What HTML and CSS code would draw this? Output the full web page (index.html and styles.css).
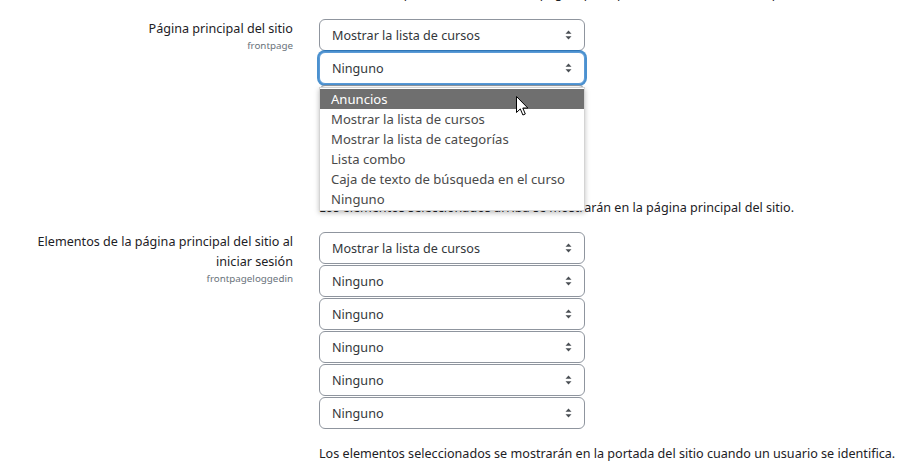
FILE: index.html
```html
<!DOCTYPE html>
<html lang="es">
<head>
<meta charset="utf-8">
<title>Página principal</title>
<link rel="stylesheet" href="styles.css">
</head>
<body>
<div class="page">
  <div class="prev-desc">Este resumen puede mostrarse en la página principal del sitio usando el bloque de resumen del curso/sitio.</div>

  <div class="setting first">
    <div class="label">
      <div class="name">Página principal del sitio</div>
      <div class="key">frontpage</div>
    </div>
    <div class="control">
      <div class="selects">
        <div class="select"><span>Mostrar la lista de cursos</span><svg class="arrow" width="7" height="10" viewBox="0 0 7 10"><path d="M3.5 0.5L6.5 3.8H0.5Z M3.5 9.5L0.5 6.2H6.5Z"/></svg></div>
        <div class="select focus"><span>Ninguno</span><svg class="arrow" width="7" height="10" viewBox="0 0 7 10"><path d="M3.5 0.5L6.5 3.8H0.5Z M3.5 9.5L0.5 6.2H6.5Z"/></svg></div>
        <div class="select"><span>Ninguno</span><svg class="arrow" width="7" height="10" viewBox="0 0 7 10"><path d="M3.5 0.5L6.5 3.8H0.5Z M3.5 9.5L0.5 6.2H6.5Z"/></svg></div>
        <div class="select"><span>Ninguno</span><svg class="arrow" width="7" height="10" viewBox="0 0 7 10"><path d="M3.5 0.5L6.5 3.8H0.5Z M3.5 9.5L0.5 6.2H6.5Z"/></svg></div>
        <div class="select"><span>Ninguno</span><svg class="arrow" width="7" height="10" viewBox="0 0 7 10"><path d="M3.5 0.5L6.5 3.8H0.5Z M3.5 9.5L0.5 6.2H6.5Z"/></svg></div>

        <ul class="dropdown">
          <li class="active">Anuncios</li>
          <li>Mostrar la lista de cursos</li>
          <li>Mostrar la lista de categorías</li>
          <li>Lista combo</li>
          <li>Caja de texto de búsqueda en el curso</li>
          <li>Ninguno</li>
        </ul>
        <svg class="cursor" width="13" height="21" viewBox="0 0 13 21"><path d="M0.5 0.5V16.5L4.3 12.9L6.9 19L9.3 18L6.8 12H11.8Z" fill="#fff" stroke="#000" stroke-width="1" stroke-linejoin="miter"/></svg>
      </div>
      <div class="desc">Los elementos seleccionados arriba se mostrarán en la página principal del sitio.</div>
    </div>
  </div>

  <div class="setting">
    <div class="label">
      <div class="name">Elementos de la página principal del sitio al iniciar sesión</div>
      <div class="key">frontpageloggedin</div>
    </div>
    <div class="control">
      <div class="selects">
        <div class="select"><span>Mostrar la lista de cursos</span><svg class="arrow" width="7" height="10" viewBox="0 0 7 10"><path d="M3.5 0.5L6.5 3.8H0.5Z M3.5 9.5L0.5 6.2H6.5Z"/></svg></div>
        <div class="select"><span>Ninguno</span><svg class="arrow" width="7" height="10" viewBox="0 0 7 10"><path d="M3.5 0.5L6.5 3.8H0.5Z M3.5 9.5L0.5 6.2H6.5Z"/></svg></div>
        <div class="select"><span>Ninguno</span><svg class="arrow" width="7" height="10" viewBox="0 0 7 10"><path d="M3.5 0.5L6.5 3.8H0.5Z M3.5 9.5L0.5 6.2H6.5Z"/></svg></div>
        <div class="select"><span>Ninguno</span><svg class="arrow" width="7" height="10" viewBox="0 0 7 10"><path d="M3.5 0.5L6.5 3.8H0.5Z M3.5 9.5L0.5 6.2H6.5Z"/></svg></div>
        <div class="select"><span>Ninguno</span><svg class="arrow" width="7" height="10" viewBox="0 0 7 10"><path d="M3.5 0.5L6.5 3.8H0.5Z M3.5 9.5L0.5 6.2H6.5Z"/></svg></div>
        <div class="select"><span>Ninguno</span><svg class="arrow" width="7" height="10" viewBox="0 0 7 10"><path d="M3.5 0.5L6.5 3.8H0.5Z M3.5 9.5L0.5 6.2H6.5Z"/></svg></div>
      </div>
      <div class="desc">Los elementos seleccionados se mostrarán en la portada del sitio cuando un usuario se identifica.</div>
    </div>
  </div>
</div>
</body>
</html>
```

FILE: styles.css
```css
html, body {
  margin: 0;
  padding: 0;
  background: #fff;
}
body {
  font-family: "Noto Sans", "Open Sans", sans-serif;
  font-size: 12.6px;
  color: #1d2125;
  overflow: hidden;
}
.page {
  width: 904px;
  height: 464px;
  overflow: hidden;
}
.prev-desc {
  margin: -16px 0 0 320px;
  height: 19px;
  line-height: 20px;
  white-space: nowrap;
}
.setting {
  display: grid;
  grid-template-columns: 293px 266px;
  column-gap: 26px;
  margin-top: 14px;
}
.setting.first {
  margin-top: 16px;
}
.label {
  text-align: right;
}
.name {
  line-height: 20px;
}
.key {
  font-size: 9.8px;
  line-height: 14px;
  color: #6a737b;
}
.control {
  min-width: 0;
}
.selects {
  position: relative;
  display: flex;
  flex-direction: column;
  gap: 1px;
}
.select {
  box-sizing: border-box;
  height: 32px;
  border: 1px solid #8f959e;
  border-radius: 6px;
  padding: 0 12px 0 12px;
  display: flex;
  align-items: center;
  justify-content: space-between;
  color: #33373b;
  background: #fff;
}
.select.focus {
  border-color: #5b9ad6;
  box-shadow: 0 0 0 2px rgba(15, 108, 191, 0.75);
}
.arrow path {
  fill: #4a4f54;
}
.dropdown {
  position: absolute;
  left: 0;
  top: 68px;
  width: 266px;
  box-sizing: border-box;
  margin: 0;
  padding: 1px 0;
  list-style: none;
  background: #fff;
  border: 1px solid #d4d4d4;
  box-shadow: 0 2px 5px rgba(0, 0, 0, 0.25);
}
.dropdown li {
  font-size: 13.1px;
  line-height: 20px;
  padding-left: 11px;
  color: #4a4a4a;
  white-space: nowrap;
}
.dropdown li.active {
  background: #6f6f6f;
  color: #fff;
}
.cursor {
  position: absolute;
  left: 197px;
  top: 77px;
}
.desc {
  margin-top: 15px;
  line-height: 20px;
  white-space: nowrap;
}
```
